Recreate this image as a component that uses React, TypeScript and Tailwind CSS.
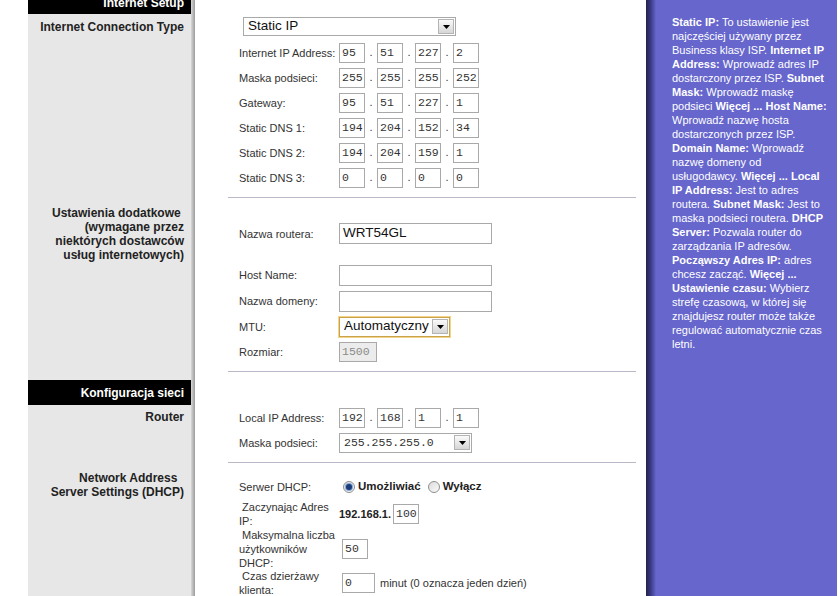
import React from 'react';

const GRAY = 'bg-[#e7e7e7]';

// Left label column + shading strip + white content cell
const Row: React.FC<{ left?: React.ReactNode; leftClass?: string; children?: React.ReactNode; grow?: boolean }> = ({
  left,
  leftClass = '',
  children,
  grow,
}) => (
  <div className={`flex ${grow ? 'flex-1' : ''}`}>
    <div className={`w-[163px] shrink-0 text-right pr-[7px] ${leftClass || GRAY}`}>{left}</div>
    <div className="w-[4px] shrink-0 bg-gradient-to-r from-[#d8d8d8] to-[#9c9c9c]" />
    <div className="flex-1 bg-white">{children}</div>
  </div>
);

const SectionTitle: React.FC<{ children: React.ReactNode }> = ({ children }) => (
  <div className="text-[12px] font-bold text-white leading-[14px]">{children}</div>
);

const SideLabel: React.FC<{ children: React.ReactNode }> = ({ children }) => (
  <div className="text-[12px] font-bold text-[#222] leading-[14px]">{children}</div>
);

const Divider = () => <div className="h-px bg-[#b8b8c8] ml-[33px] mr-[10px]" />;

const FieldRow: React.FC<{ label: React.ReactNode; h?: string; children?: React.ReactNode }> = ({
  label,
  h = 'h-[25px]',
  children,
}) => (
  <div className={`flex items-center pl-[44px] ${h}`}>
    <div className="w-[100px] shrink-0 text-[11px] leading-[14px] text-[#333]">{label}</div>
    <div className="flex items-center">{children}</div>
  </div>
);

const Box: React.FC<{ value?: string; w?: string; h?: string; disabled?: boolean; className?: string }> = ({
  value = '',
  w = 'w-[26px]',
  h = 'h-[20px]',
  disabled,
  className = '',
}) => (
  <div
    className={`${w} ${h} border border-[#a9a9a9] flex items-center pl-[2px] font-['Liberation_Mono',monospace] text-[11.5px] ${
      disabled ? 'bg-[#ececec] text-[#8a8a8a]' : 'bg-white text-[#333]'
    } ${className}`}
  >
    {value}
  </div>
);

const IpFields: React.FC<{ parts: string[] }> = ({ parts }) => (
  <div className="flex items-center">
    {parts.map((p, i) => (
      <React.Fragment key={i}>
        {i > 0 && <span className="w-[12px] text-center text-[11px] text-[#333]">.</span>}
        <Box value={p} />
      </React.Fragment>
    ))}
  </div>
);

const DropArrow = () => (
  <div className="w-[16px] h-[15px] border border-[#b4b4b4] bg-gradient-to-b from-[#fafafa] to-[#d6d6d6] flex items-center justify-center">
    <svg width="7" height="4" viewBox="0 0 7 4">
      <path d="M0 0h7L3.5 4z" fill="#000" />
    </svg>
  </div>
);

const Select: React.FC<{
  value: string;
  w: string;
  h?: string;
  mono?: boolean;
  focus?: boolean;
  className?: string;
}> = ({ value, w, h = 'h-[19px]', mono, focus, className = '' }) => (
  <div
    className={`${w} ${h} flex items-center justify-between bg-white pl-[4px] pr-px ${
      focus ? 'border border-[#c9a24a] ring-1 ring-[#f2d48a]' : 'border border-[#a9a9a9]'
    } ${className}`}
  >
    <span
      className={
        mono
          ? "font-['Liberation_Mono',monospace] text-[11.5px] text-[#333]"
          : 'text-[13.5px] text-[#111]'
      }
    >
      {value}
    </span>
    <DropArrow />
  </div>
);

const Radio: React.FC<{ on?: boolean }> = ({ on }) => (
  <span className="w-[12px] h-[12px] rounded-full border border-[#8e8f8f] bg-gradient-to-br from-[#dcdcdc] to-[#fbfbfb] flex items-center justify-center">
    {on && <span className="w-[6px] h-[6px] rounded-full bg-[#1c3c78] ring-1 ring-[#7fa6d8]" />}
  </span>
);

const HelpPanel = () => (
  <aside className="w-[191px] shrink-0 bg-[#6666cc] flex">
    <div className="w-[10px] shrink-0 bg-gradient-to-r from-[#22224a] via-[#3c3c88] to-[#6666cc]" />
    <div className="pl-[16px] pt-[15px] text-[11px] leading-[14px] text-white whitespace-nowrap">
      <b>Static IP:</b> To ustawienie jest
      <br />
      najczęściej używany przez
      <br />
      Business klasy ISP. <b>Internet IP</b>
      <br />
      <b>Address:</b> Wprowadź adres IP
      <br />
      dostarczony przez ISP. <b>Subnet</b>
      <br />
      <b>Mask:</b> Wprowadź maskę
      <br />
      podsieci <b>Więcej ... Host Name:</b>
      <br />
      Wprowadź nazwę hosta
      <br />
      dostarczonych przez ISP.
      <br />
      <b>Domain Name:</b> Wprowadź
      <br />
      nazwę domeny od
      <br />
      usługodawcy. <b>Więcej ... Local</b>
      <br />
      <b>IP Address:</b> Jest to adres
      <br />
      routera. <b>Subnet Mask:</b> Jest to
      <br />
      maska podsieci routera. <b>DHCP</b>
      <br />
      <b>Server:</b> Pozwala router do
      <br />
      zarządzania IP adresów.
      <br />
      <b>Począwszy Adres IP:</b> adres
      <br />
      chcesz zacząć. <b>Więcej ...</b>
      <br />
      <b>Ustawienie czasu:</b> Wybierz
      <br />
      strefę czasową, w której się
      <br />
      znajdujesz router może także
      <br />
      regulować automatycznie czas
      <br />
      letni.
    </div>
  </aside>
);

export default function App() {
  return (
    <div className="w-[838px] h-[596px] overflow-hidden bg-white flex font-['Liberation_Sans',Arial,sans-serif]">
      <div className="w-[28px] shrink-0" />

      <div className="w-[618px] shrink-0 flex flex-col">
        {/* Internet Setup */}
        <Row
          leftClass="bg-black h-[14px] overflow-hidden"
          left={
            <div className="-mt-[4px]">
              <SectionTitle>Internet Setup</SectionTitle>
            </div>
          }
        />

        <Row left={<div className="pt-[6px]"><SideLabel>Internet Connection Type</SideLabel></div>}>
          <div className="pt-[3px] pl-[48px]">
            <Select value="Static IP" w="w-[213px]" h="h-[19px]" />
          </div>
          <div className="mt-[4px]">
            <FieldRow label="Internet IP Address:">
              <IpFields parts={['95', '51', '227', '2']} />
            </FieldRow>
            <FieldRow label="Maska podsieci:">
              <IpFields parts={['255', '255', '255', '252']} />
            </FieldRow>
            <FieldRow label="Gateway:">
              <IpFields parts={['95', '51', '227', '1']} />
            </FieldRow>
            <FieldRow label="Static DNS 1:">
              <IpFields parts={['194', '204', '152', '34']} />
            </FieldRow>
            <FieldRow label="Static DNS 2:">
              <IpFields parts={['194', '204', '159', '1']} />
            </FieldRow>
            <FieldRow label="Static DNS 3:">
              <IpFields parts={['0', '0', '0', '0']} />
            </FieldRow>
          </div>
          <div className="mt-[7px]">
            <Divider />
          </div>
        </Row>

        {/* Optional settings */}
        <Row
          left={
            <div className="pt-[8px]">
              <SideLabel>
                Ustawienia dodatkowe&nbsp;
                <br />
                (wymagane przez
                <br />
                niektórych dostawców
                <br />
                usług internetowych)
              </SideLabel>
            </div>
          }
        >
          <div className="pt-[23px]">
            <FieldRow label="Nazwa routera:">
              <div className="w-[153px] h-[21px] border border-[#a9a9a9] bg-white flex items-center pl-[3px] text-[13.5px] text-[#111]">
                WRT54GL
              </div>
            </FieldRow>
          </div>
          <div className="mt-[16px]">
            <FieldRow label="Host Name:" h="h-[26px]">
              <Box w="w-[153px]" h="h-[21px]" />
            </FieldRow>
            <FieldRow label="Nazwa domeny:" h="h-[26px]">
              <Box w="w-[153px]" h="h-[21px]" />
            </FieldRow>
            <FieldRow label="MTU:">
              <Select value="Automatyczny" w="w-[111px]" h="h-[20px]" focus />
            </FieldRow>
            <FieldRow label="Rozmiar:">
              <Box value="1500" w="w-[38px]" disabled />
            </FieldRow>
          </div>
          <div className="mt-[7px] pb-[8px]">
            <Divider />
          </div>
        </Row>

        {/* Network setup */}
        <Row
          leftClass="bg-black h-[25px] flex items-center justify-end"
          left={<SectionTitle>Konfiguracja sieci</SectionTitle>}
        />

        <Row left={<div className="pt-[5px]"><SideLabel>Router</SideLabel></div>}>
          <FieldRow label="Local IP Address:">
            <IpFields parts={['192', '168', '1', '1']} />
          </FieldRow>
          <FieldRow label="Maska podsieci:">
            <Select value="255.255.255.0" w="w-[133px]" h="h-[20px]" mono />
          </FieldRow>
          <div className="mt-[7px]">
            <Divider />
          </div>
        </Row>

        <Row
          grow
          left={
            <div className="pt-[8px]">
              <SideLabel>
                Network Address&nbsp;&nbsp;
                <br />
                Server Settings (DHCP)
              </SideLabel>
            </div>
          }
        >
          <div className="pt-[11px]">
            <FieldRow label="Serwer DHCP:" h="h-[26px]">
              <div className="flex items-center ml-[4px] text-[11.5px] font-bold text-[#222]">
                <Radio on />
                <span className="ml-[3px]">Umożliwiać</span>
                <span className="ml-[7px]">
                  <Radio />
                </span>
                <span className="ml-[3px]">Wyłącz</span>
              </div>
            </FieldRow>
            <FieldRow
              h="h-[28px]"
              label={
                <>
                  &nbsp;Zaczynając Adres
                  <br />
                  IP:
                </>
              }
            >
              <span className="text-[11px] font-bold text-[#222] mr-[2px]">192.168.1.</span>
              <Box value="100" />
            </FieldRow>
            <FieldRow
              h="h-[41px]"
              label={
                <>
                  &nbsp;Maksymalna liczba
                  <br />
                  użytkowników
                  <br />
                  DHCP:
                </>
              }
            >
              <Box value="50" className="ml-[3px]" />
            </FieldRow>
            <FieldRow
              h="h-[28px]"
              label={
                <>
                  &nbsp;Czas dzierżawy
                  <br />
                  klienta:
                </>
              }
            >
              <Box value="0" w="w-[33px]" className="ml-[3px]" />
              <span className="ml-[5px] text-[11px] text-[#333]">minut (0 oznacza jeden dzień)</span>
            </FieldRow>
          </div>
        </Row>
      </div>

      <HelpPanel />
    </div>
  );
}
